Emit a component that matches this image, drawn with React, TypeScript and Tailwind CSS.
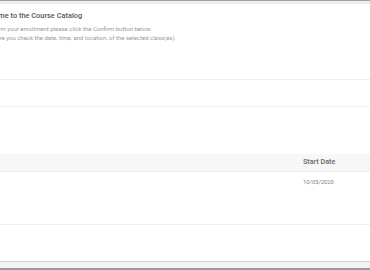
const rows = [{ startDate: '10/05/2020' }];

export default function App() {
  return (
    <div
      className="w-[370px] h-[270px] flex flex-col bg-white overflow-hidden"
      style={{ fontFamily: 'Roboto, "Liberation Sans", sans-serif' }}
    >
      {/* top frame */}
      <div className="border-t border-[#a3a3a3] h-[4px] bg-[#f1f1f1] border-b border-b-[#e8e8e8] shrink-0" />

      <div className="flex-1 flex flex-col">
        {/* intro */}
        <div className="h-[76px] border-b border-[#efefef] pt-[7px] shrink-0">
          <div className="-ml-[22px]">
            <h1 className="text-[7.4px] leading-[10px] font-medium text-[#555]">
              Welcome to the Course Catalog
            </h1>
            <p className="mt-[4px] -ml-[1px] text-[6px] leading-[8.5px] text-[#999]">
              To confirm your enrollment please click the Confirm button below.
            </p>
            <p className="-ml-[1px] text-[6px] leading-[8.5px] text-[#999]">
              Make sure you check the date, time, and location, of the selected class(es).
            </p>
          </div>
        </div>

        <div className="h-[27px] border-b border-[#efefef] shrink-0" />
        <div className="h-[47px] shrink-0" />

        {/* table */}
        <div className="flex h-[18px] items-center bg-[#f7f7f7] border-b border-[#ebebeb] shrink-0">
          <div className="flex-1" />
          <div className="w-[67px] text-[7.2px] font-medium text-[#666]">Start Date</div>
        </div>
        {rows.map((r) => (
          <div key={r.startDate} className="flex h-[53px] border-b border-[#efefef] pt-[6px] shrink-0">
            <div className="flex-1" />
            <div className="w-[67px] text-[5.8px] text-[#808080]">{r.startDate}</div>
          </div>
        ))}
        <div className="flex-1" />
      </div>

      {/* bottom frame */}
      <div className="border-t border-[#d2d2d2] h-[9px] bg-[#f3f3f3] border-b-2 border-b-[#9b9b9b] shrink-0" />
    </div>
  );
}
